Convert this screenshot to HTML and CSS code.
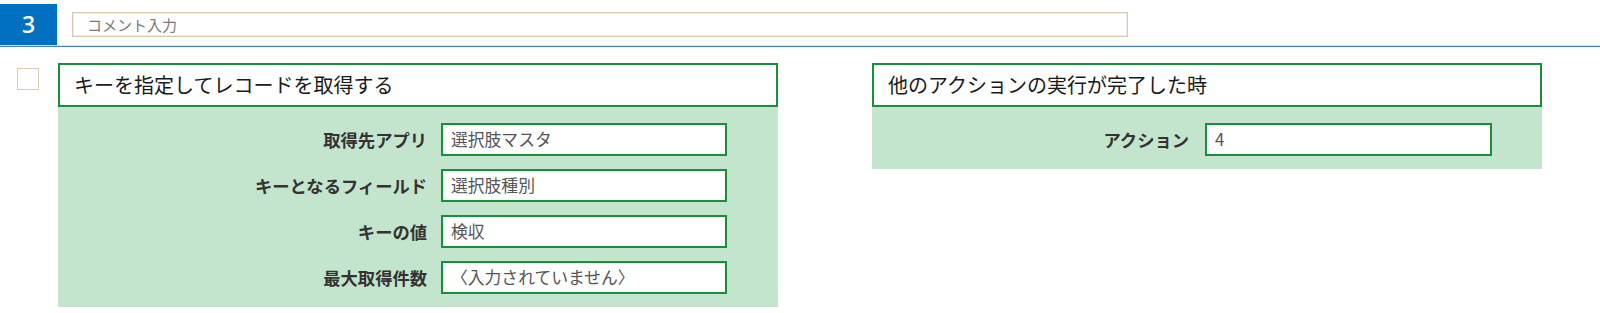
FILE: index.html
```html
<!DOCTYPE html>
<html lang="ja">
<head>
<meta charset="utf-8">
<link rel="stylesheet" href="styles.css">
</head>
<body>
<div class="header">
  <div class="step-no">3</div>
  <div class="comment">コメント入力</div>
</div>
<div class="content">
  <div class="check"></div>
  <div class="panel panel-left">
    <div class="panel-title">キーを指定してレコードを取得する</div>
    <div class="panel-body rows-left">
      <div class="label">取得先アプリ</div><div class="field">選択肢マスタ</div>
      <div class="label">キーとなるフィールド</div><div class="field">選択肢種別</div>
      <div class="label">キーの値</div><div class="field">検収</div>
      <div class="label">最大取得件数</div><div class="field">〈入力されていません〉</div>
    </div>
  </div>
  <div class="panel panel-right">
    <div class="panel-title">他のアクションの実行が完了した時</div>
    <div class="panel-body rows-right">
      <div class="label">アクション</div><div class="field">4</div>
    </div>
  </div>
</div>
</body>
</html>
```

FILE: styles.css
```css
html, body {
  margin: 0;
  padding: 0;
  background: #ffffff;
  font-family: "Noto Sans CJK JP", "Noto Sans", sans-serif;
}
.header {
  display: flex;
  align-items: flex-start;
  height: 41px;
  padding-top: 4px;
  border-bottom: 1px solid #d5dfeb;
  box-shadow: 0 1px 0 #4f80c2;
}
.step-no {
  width: 57px;
  height: 41px;
  background: #0070c0;
  color: #ffffff;
  font-family: "Open Sans", "Noto Sans", sans-serif;
  font-weight: 600;
  font-size: 23px;
  line-height: 41px;
  text-align: center;
}
.comment {
  margin-left: 15px;
  margin-top: 8px;
  width: 1040px;
  height: 23px;
  border: 1px solid #d8c6b2;
  box-shadow: inset 0 0 0 1px #f3eee8;
  padding-left: 14px;
  font-size: 15px;
  line-height: 23px;
  color: #7a7a7a;
}
.content {
  display: flex;
  align-items: flex-start;
  padding: 17px 0 0 17px;
}
.check {
  width: 20px;
  height: 20px;
  border: 1px solid #dccbb8;
  margin-top: 5px;
  margin-right: 19px;
}
.panel-title {
  height: 40px;
  border: 2px solid #188f3b;
  background: #ffffff;
  font-size: 20px;
  line-height: 40px;
  padding-left: 14px;
  color: #1a1a1a;
}
.panel-body {
  background: #c4e5cd;
  display: grid;
  align-items: center;
  row-gap: 13px;
  column-gap: 14px;
}
.panel-left {
  width: 720px;
}
.panel-right {
  width: 670px;
  margin-left: 94px;
}
.rows-left {
  grid-template-columns: 369px 286px;
  padding: 16px 0 13px 0;
}
.rows-right {
  grid-template-columns: 317px 287px;
  column-gap: 16px;
  padding: 16px 0 13px 0;
}
.label {
  text-align: right;
  font-weight: bold;
  font-size: 17.3px;
  color: #333333;
}
.field {
  height: 29px;
  border: 2px solid #188f3b;
  background: #ffffff;
  padding-left: 8px;
  font-size: 16.8px;
  line-height: 29px;
  color: #555555;
  box-sizing: content-box;
}
```
